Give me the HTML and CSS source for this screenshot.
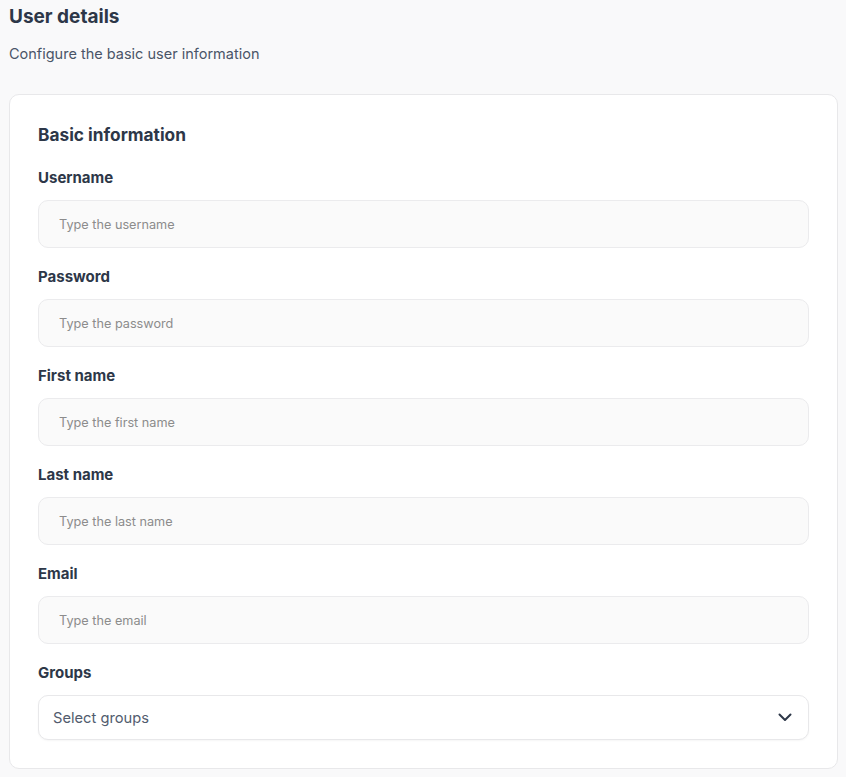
FILE: index.html
```html
<!DOCTYPE html>
<html lang="en">
<head>
<meta charset="utf-8">
<title>User details</title>
<link rel="stylesheet" href="styles.css">
</head>
<body>
<main class="page">
  <header class="page-header">
    <h1 class="page-title">User details</h1>
    <p class="page-subtitle">Configure the basic user information</p>
  </header>
  <section class="card">
    <h2 class="card-title">Basic information</h2>
    <div class="field">
      <label class="field-label" for="username">Username</label>
      <input class="field-input" id="username" type="text" placeholder="Type the username">
    </div>
    <div class="field">
      <label class="field-label" for="password">Password</label>
      <input class="field-input" id="password" type="password" placeholder="Type the password">
    </div>
    <div class="field">
      <label class="field-label" for="first">First name</label>
      <input class="field-input" id="first" type="text" placeholder="Type the first name">
    </div>
    <div class="field">
      <label class="field-label" for="last">Last name</label>
      <input class="field-input" id="last" type="text" placeholder="Type the last name">
    </div>
    <div class="field">
      <label class="field-label" for="email">Email</label>
      <input class="field-input" id="email" type="email" placeholder="Type the email">
    </div>
    <div class="field">
      <label class="field-label">Groups</label>
      <div class="select">
        <span class="select-text">Select groups</span>
        <svg class="select-icon" width="14" height="9" viewBox="0 0 14 9" fill="none">
          <path d="M1.5 1.5 L7 7 L12.5 1.5" stroke="#2d3748" stroke-width="2" stroke-linecap="round" stroke-linejoin="round"/>
        </svg>
      </div>
    </div>
  </section>
</main>
</body>
</html>
```
FILE: styles.css
```css
* { box-sizing: border-box; }
html, body {
  margin: 0;
  background: #f9f9fa;
}
body {
  font-family: "Inter", "Lato", sans-serif;
  color: #2d3748;
}
.page {
  padding: 5px 8px 8px 9px;
}
.page-title {
  margin: 0;
  font-size: 19px;
  line-height: 24px;
  font-weight: 700;
  color: #2d3748;
}
.page-subtitle {
  margin: 15px 0 0 0;
  font-size: 14.5px;
  line-height: 20px;
  color: #4a5568;
}
.card {
  margin-top: 30px;
  background: #ffffff;
  border: 1px solid #e8e8ea;
  border-radius: 10px;
  padding: 28px 28px 28px 28px;
}
.card-title {
  margin: 0;
  font-size: 17.3px;
  line-height: 24px;
  font-weight: 700;
}
.field {
  display: flex;
  flex-direction: column;
  margin-top: 21px;
}
.field + .field { margin-top: 19px; }
.field-label {
  font-size: 15px;
  line-height: 20px;
  font-weight: 700;
  margin-bottom: 12px;
}
.field-input {
  height: 48px;
  border: 1px solid #ebebed;
  border-radius: 10px;
  background: #fafafa;
  padding: 0 20px;
  font-family: inherit;
  font-size: 12.7px;
  color: #2d3748;
  outline: none;
}
.field-input::placeholder { color: #8c8c8c; }
.select {
  height: 45px;
  display: flex;
  align-items: center;
  justify-content: space-between;
  border: 1px solid #e8e8ea;
  border-radius: 10px;
  background: #ffffff;
  box-shadow: 0 1px 2px rgba(0,0,0,0.04);
  padding: 0 16px 0 14px;
}
.select-text {
  font-size: 14.7px;
  color: #525c6e;
}
.select-icon { display: block; }
```
